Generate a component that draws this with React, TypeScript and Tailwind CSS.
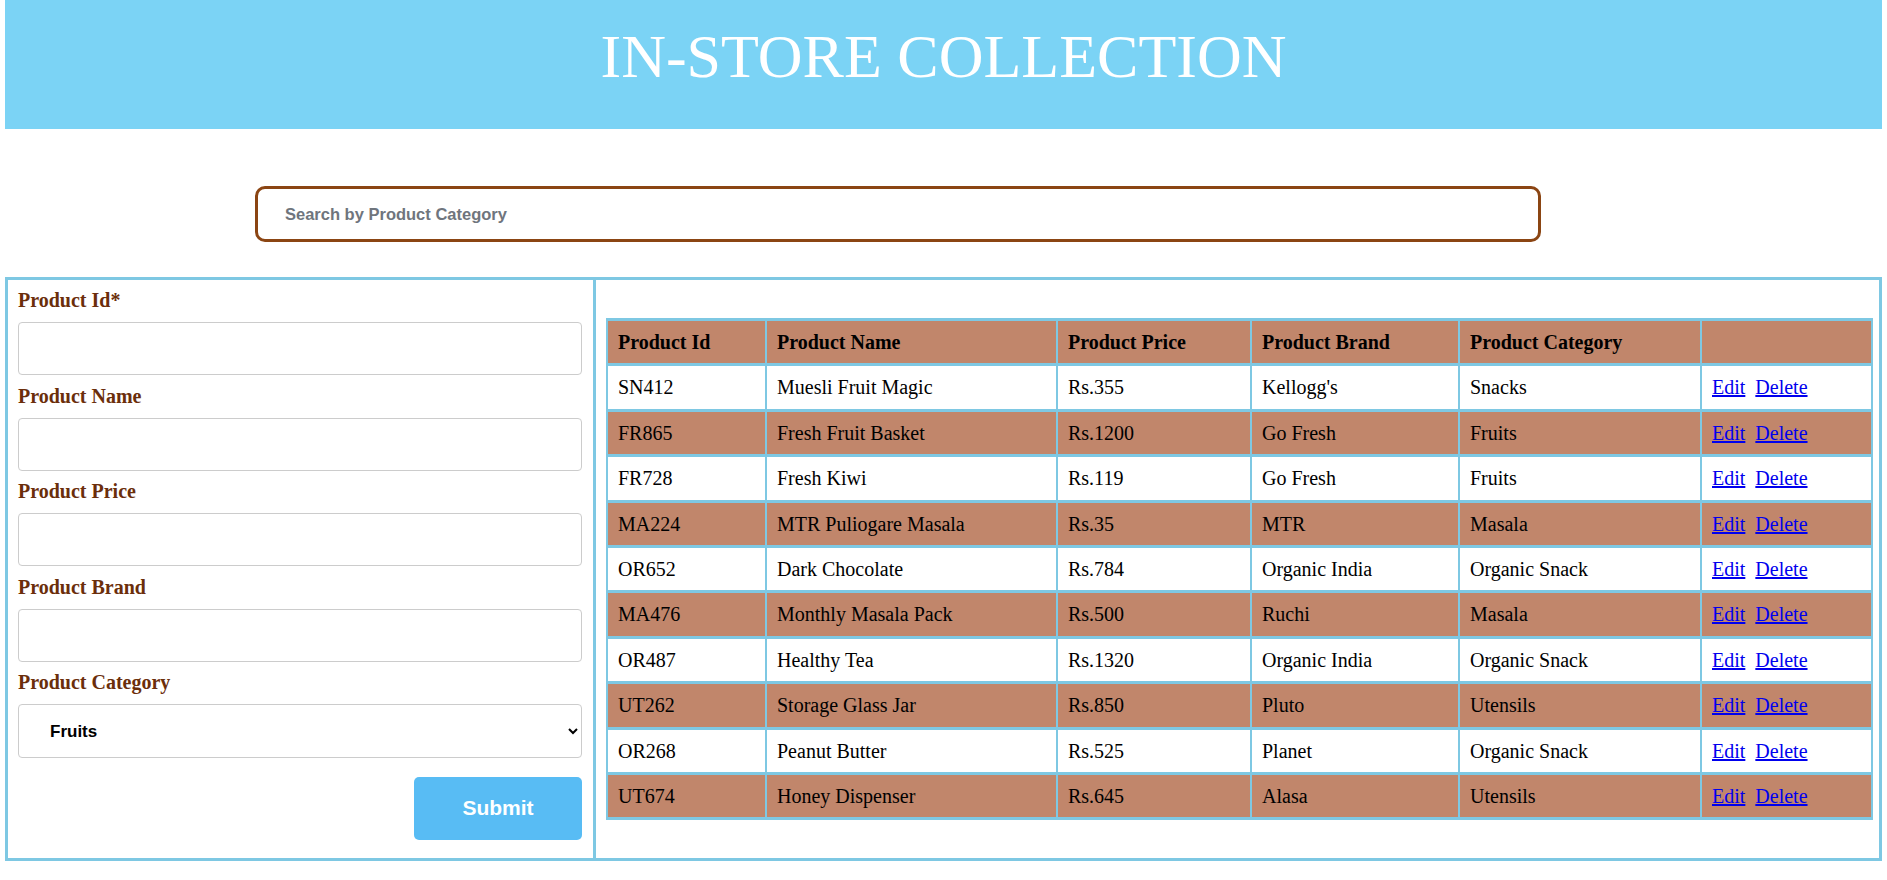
const products = [
  { id: "SN412", name: "Muesli Fruit Magic", price: "Rs.355", brand: "Kellogg's", category: "Snacks" },
  { id: "FR865", name: "Fresh Fruit Basket", price: "Rs.1200", brand: "Go Fresh", category: "Fruits" },
  { id: "FR728", name: "Fresh Kiwi", price: "Rs.119", brand: "Go Fresh", category: "Fruits" },
  { id: "MA224", name: "MTR Puliogare Masala", price: "Rs.35", brand: "MTR", category: "Masala" },
  { id: "OR652", name: "Dark Chocolate", price: "Rs.784", brand: "Organic India", category: "Organic Snack" },
  { id: "MA476", name: "Monthly Masala Pack", price: "Rs.500", brand: "Ruchi", category: "Masala" },
  { id: "OR487", name: "Healthy Tea", price: "Rs.1320", brand: "Organic India", category: "Organic Snack" },
  { id: "UT262", name: "Storage Glass Jar", price: "Rs.850", brand: "Pluto", category: "Utensils" },
  { id: "OR268", name: "Peanut Butter", price: "Rs.525", brand: "Planet", category: "Organic Snack" },
  { id: "UT674", name: "Honey Dispenser", price: "Rs.645", brand: "Alasa", category: "Utensils" },
]

const fields = ["Product Id*", "Product Name", "Product Price", "Product Brand"]

const cell = "border-x-2 border-y-[3px] border-[#7ec8e3] px-[10px] py-[10px] leading-[22.4px] text-left"

const App = () => {
  return (
    <div className="min-h-screen bg-white px-[5px] font-['Liberation_Serif','Times_New_Roman',serif]">
      <div className="h-[129px] bg-[#7bd3f5] flex justify-center pt-[10px]">
        <h1 className="text-white text-[62px] leading-normal">IN-STORE COLLECTION</h1>
      </div>

      <div className="mt-[57px] ml-[250px] w-[1286px]">
        <input
          type="text"
          placeholder="Search by Product Category"
          className="w-full h-[56px] border-[3px] border-[#8b4513] rounded-[10px] pl-[27px] font-['Liberation_Sans',Arial,sans-serif] font-bold text-[16.5px] placeholder:text-[#6f757d] outline-none"
        />
      </div>

      <div className="mt-[35px] flex border-[3px] border-[#7ec8e3]">
        <div className="w-[588px] shrink-0 border-r-[3px] border-[#7ec8e3] pl-[10px] pr-[11px] pt-[9px] pb-[18px] flex flex-col">
          {fields.map((f) => (
            <div key={f} className="mb-[9.5px]">
              <label className="block text-[20px] leading-[23px] font-bold text-[#6b2e0b] mb-[10px]">{f}</label>
              <input type="text" className="w-full h-[53px] border border-[#cccccc] rounded-[4px] outline-none" />
            </div>
          ))}
          <div>
            <label className="block text-[20px] leading-[23px] font-bold text-[#6b2e0b] mb-[10px]">Product Category</label>
            <select
              defaultValue="Fruits"
              className="w-full h-[54px] border border-[#cccccc] rounded-[4px] bg-white pl-[27px] pr-[8px] font-['Liberation_Sans',Arial,sans-serif] font-bold text-[17px] text-black outline-none"
            >
              <option>Snacks</option>
              <option>Fruits</option>
              <option>Masala</option>
              <option>Organic Snack</option>
              <option>Utensils</option>
            </select>
          </div>
          <button className="self-end mt-[18.5px] w-[168px] h-[63px] bg-[#58bcf4] rounded-[5px] text-white font-['Liberation_Sans',Arial,sans-serif] font-bold text-[21px]">
            Submit
          </button>
        </div>

        <div className="flex-1 pl-[10px] pr-[7px] pt-[38px]">
          <table className="w-[1265px] table-fixed border-collapse text-[20px] text-black">
            <thead>
              <tr className="bg-[#c1866b]">
                <th className={cell + " w-[159px]"}>Product Id</th>
                <th className={cell + " w-[291px]"}>Product Name</th>
                <th className={cell + " w-[194px]"}>Product Price</th>
                <th className={cell + " w-[208px]"}>Product Brand</th>
                <th className={cell + " w-[242px]"}>Product Category</th>
                <th className={cell + " w-[171px]"}></th>
              </tr>
            </thead>
            <tbody>
              {products.map((p, i) => (
                <tr key={p.id} className={i % 2 === 1 ? "bg-[#c1866b]" : "bg-white"}>
                  <td className={cell}>{p.id}</td>
                  <td className={cell}>{p.name}</td>
                  <td className={cell}>{p.price}</td>
                  <td className={cell}>{p.brand}</td>
                  <td className={cell}>{p.category}</td>
                  <td className={cell}>
                    <a href="#" className="text-[#0000ee] underline mr-[10px]">Edit</a>
                    <a href="#" className="text-[#0000ee] underline">Delete</a>
                  </td>
                </tr>
              ))}
            </tbody>
          </table>
        </div>
      </div>
    </div>
  )
}

export default App
